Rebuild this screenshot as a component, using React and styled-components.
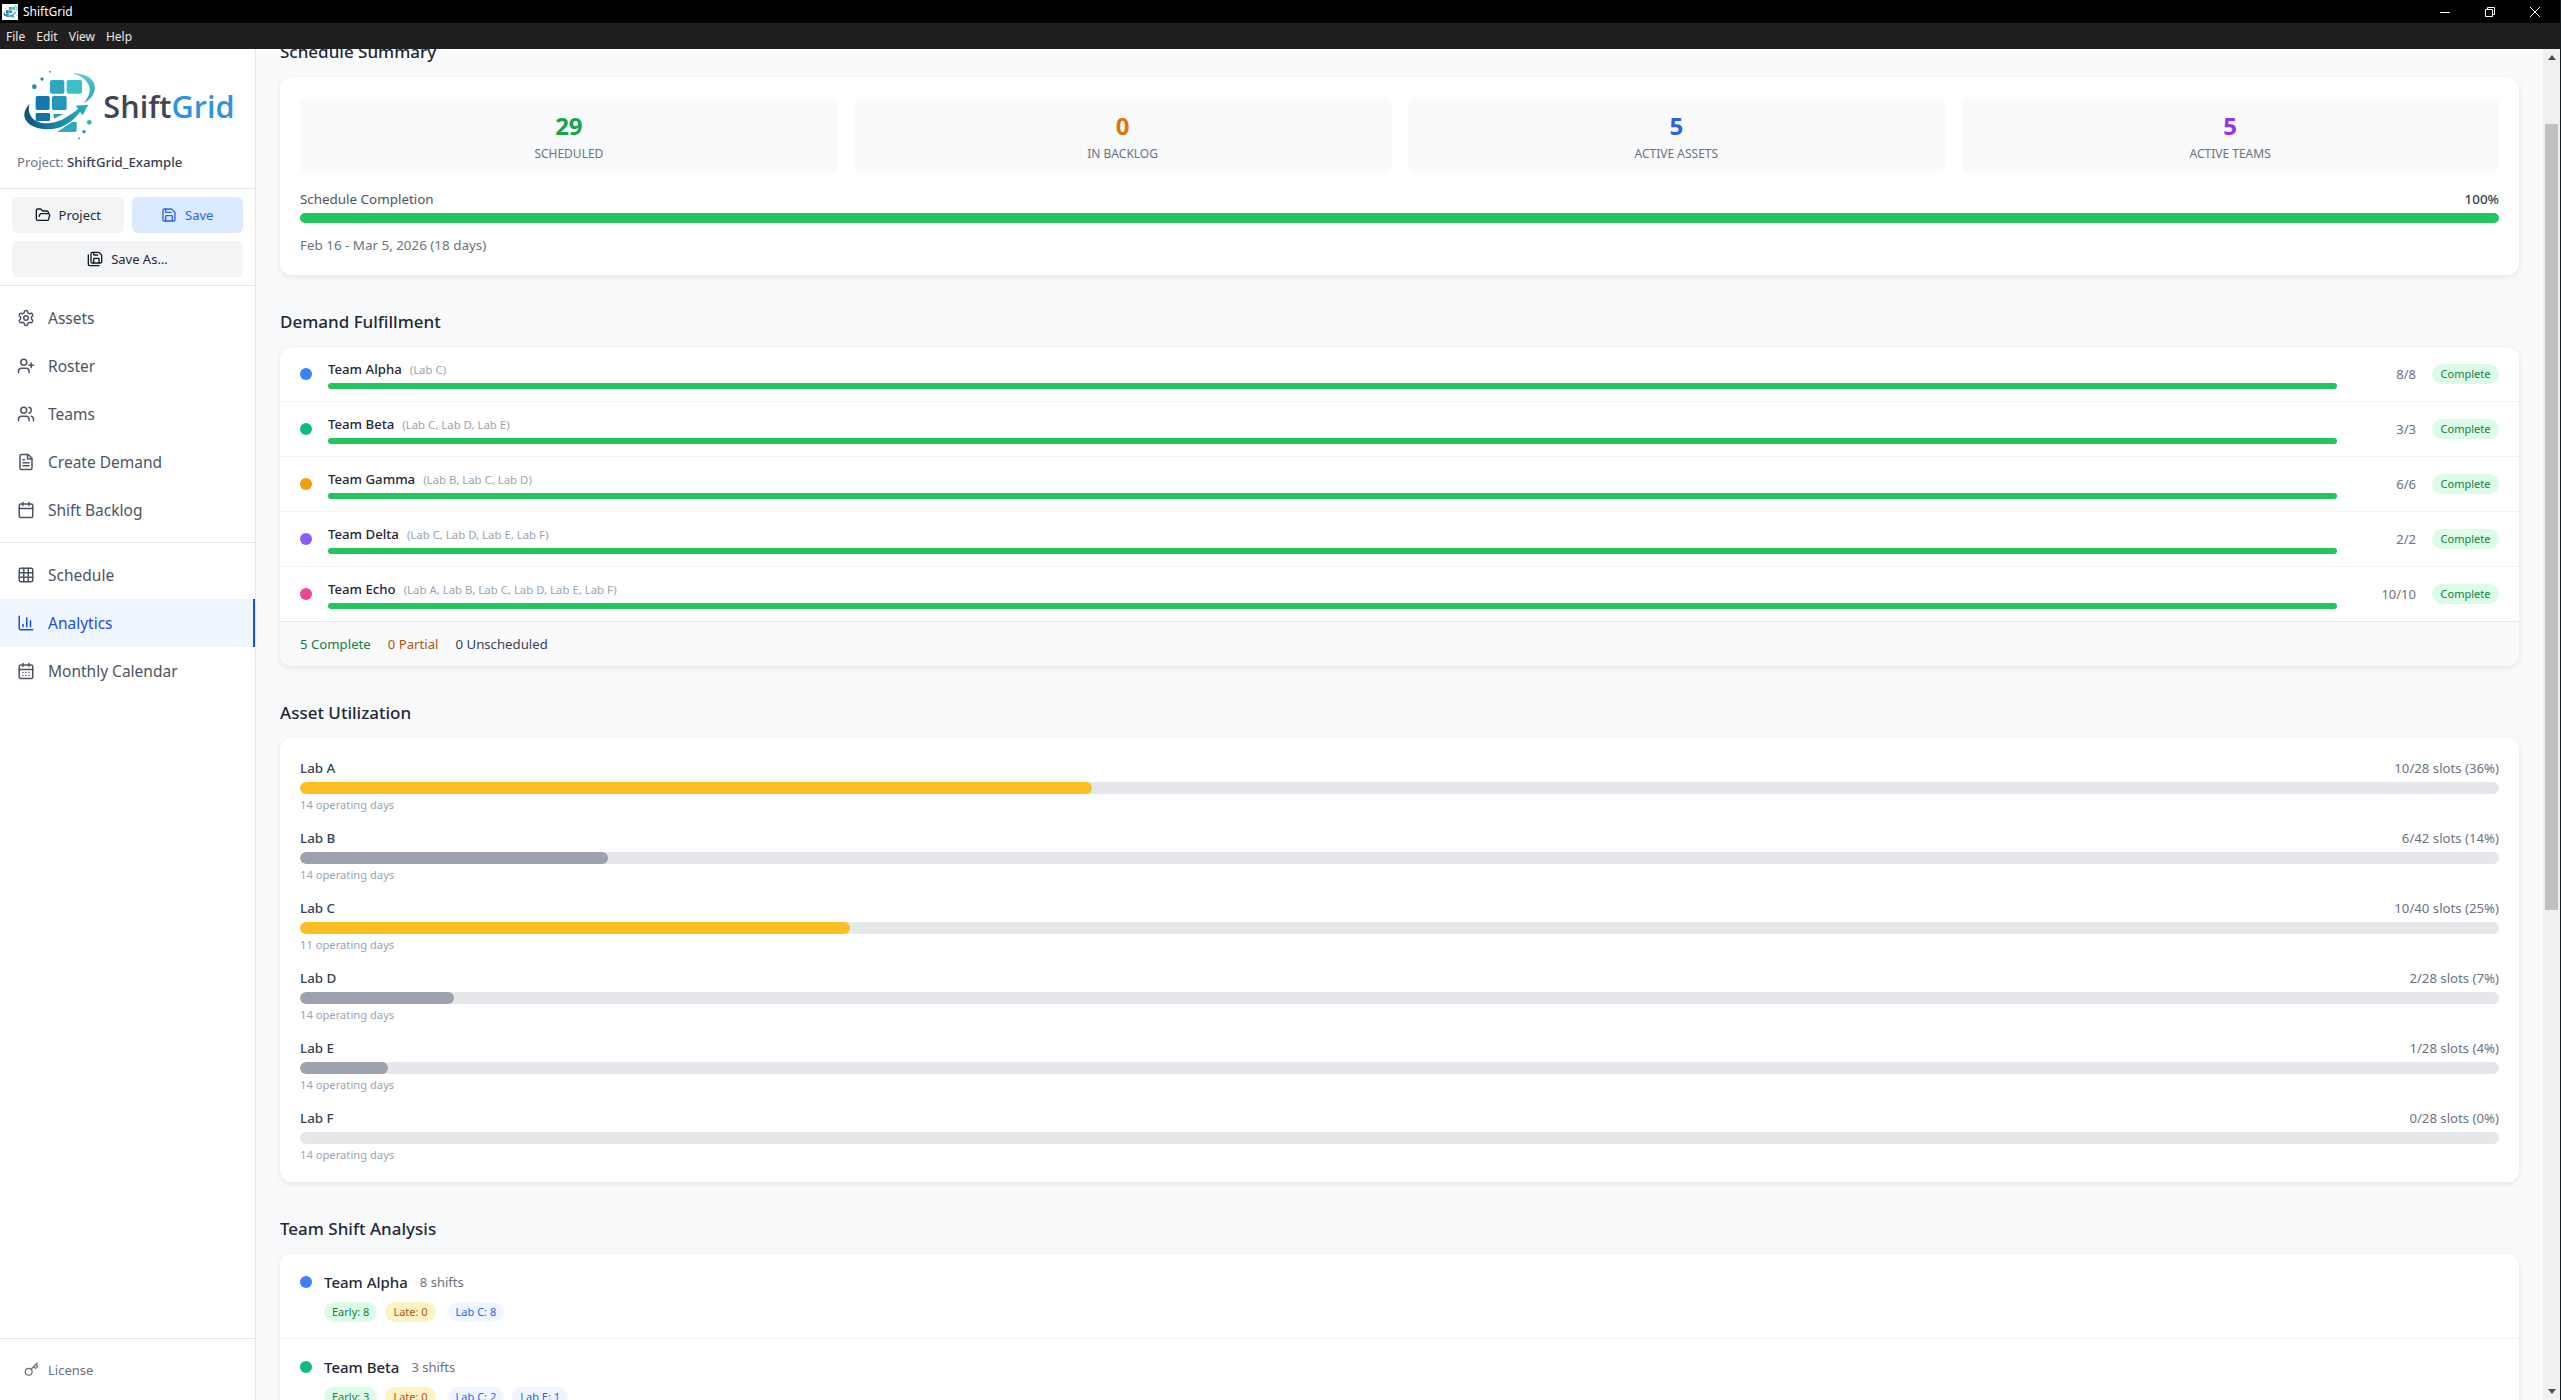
import { useLayoutEffect, useRef } from "react";
import styled, { createGlobalStyle } from "styled-components";
import {
  Settings,
  UserPlus,
  Users,
  FileText,
  Calendar,
  Grid3x3,
  ChartColumn,
  CalendarDays,
  FolderOpen,
  Save,
  SaveAll,
  Key,
} from "lucide-react";

const teams = [
  { name: "Team Alpha", color: "#3b82f6", labs: "Lab C", done: "8/8", shifts: 8, early: 8, late: 0, chips: ["Lab C: 8"] },
  { name: "Team Beta", color: "#10b981", labs: "Lab C, Lab D, Lab E", done: "3/3", shifts: 3, early: 3, late: 0, chips: ["Lab C: 2", "Lab E: 1"] },
  { name: "Team Gamma", color: "#f59e0b", labs: "Lab B, Lab C, Lab D", done: "6/6", shifts: 6, early: 4, late: 2, chips: ["Lab B: 3", "Lab C: 2", "Lab D: 1"] },
  { name: "Team Delta", color: "#8b5cf6", labs: "Lab C, Lab D, Lab E, Lab F", done: "2/2", shifts: 2, early: 1, late: 1, chips: ["Lab C: 1", "Lab D: 1"] },
  { name: "Team Echo", color: "#ec4899", labs: "Lab A, Lab B, Lab C, Lab D, Lab E, Lab F", done: "10/10", shifts: 10, early: 6, late: 4, chips: ["Lab A: 10"] },
];

const assets = [
  { name: "Lab A", slots: "10/28 slots (36%)", pct: 36, days: 14, busy: true },
  { name: "Lab B", slots: "6/42 slots (14%)", pct: 14, days: 14 },
  { name: "Lab C", slots: "10/40 slots (25%)", pct: 25, days: 11, busy: true },
  { name: "Lab D", slots: "2/28 slots (7%)", pct: 7, days: 14 },
  { name: "Lab E", slots: "1/28 slots (4%)", pct: 4, days: 14 },
  { name: "Lab F", slots: "0/28 slots (0%)", pct: 0, days: 14 },
];

const stats = [
  { value: 29, label: "Scheduled", color: "#16a34a" },
  { value: 0, label: "In Backlog", color: "#d97706" },
  { value: 5, label: "Active Assets", color: "#2563eb" },
  { value: 5, label: "Active Teams", color: "#9333ea" },
];

const setupNav = [
  { label: "Assets", Icon: Settings },
  { label: "Roster", Icon: UserPlus },
  { label: "Teams", Icon: Users },
  { label: "Create Demand", Icon: FileText },
  { label: "Shift Backlog", Icon: Calendar },
];

const viewNav = [
  { label: "Schedule", Icon: Grid3x3 },
  { label: "Analytics", Icon: ChartColumn, active: true },
  { label: "Monthly Calendar", Icon: CalendarDays },
];

const LogoMark = () => (
  <>
    <defs>
      <linearGradient id="swoosh" x1="0" y1="0" x2="1" y2="0">
        <stop offset="0" stopColor="#12527f" />
        <stop offset="1" stopColor="#25b3c4" />
      </linearGradient>
      <linearGradient id="arc" x1="0" y1="0" x2="1" y2="1">
        <stop offset="0" stopColor="#7fd6dc" />
        <stop offset="1" stopColor="#1ea5bb" />
      </linearGradient>
    </defs>
    <rect x="150" y="90" width="43" height="41" rx="6" fill="#2fa6c2" />
    <rect x="200" y="90" width="46" height="41" rx="6" fill="#3ac0c8" />
    <rect x="107" y="138" width="42" height="42" rx="5" fill="#1678b0" />
    <rect x="156" y="138" width="44" height="42" rx="5" fill="#2696bb" />
    <rect x="107" y="189" width="43" height="24" rx="4" fill="#1573ab" />
    <path d="M160 192h30l-28 14z" fill="#2a9dbd" />
    <path d="M172 246l44-30 14 0v24q0 6-6 6z" fill="#2ea9bf" />
    <path d="M88 163C62 188 70 222 112 234 170 248 214 222 240 186l8 10 17-32-38 3 8 9C196 208 160 226 122 218 96 212 82 192 88 163z" fill="url(#swoosh)" />
    <path d="M215 70C262 66 298 96 280 132 273 146 262 154 250 160 268 140 276 118 262 98 252 84 234 74 215 70z" fill="url(#arc)" />
    <circle cx="103" cy="110" r="7" fill="#1c8fc0" />
    <circle cx="126" cy="87" r="5" fill="#1c8fc0" />
    <circle cx="150" cy="65" r="3" fill="#2fa6c2" />
    <circle cx="268" cy="217" r="7" fill="#2db4c4" />
    <circle cx="252" cy="245" r="5" fill="#1c8fc0" />
    <circle cx="237" cy="265" r="3" fill="#2fa6c2" />
  </>
);

export default function App() {
  const scroller = useRef(null);

  useLayoutEffect(() => {
    scroller.current.scrollTop = 100;
  }, []);

  return (
    <Shell>
      <GlobalStyle />
      <TitleBar>
        <AppIcon viewBox="48 45 240 240">
          <LogoMark />
        </AppIcon>
        <AppName>ShiftGrid</AppName>
        <WindowButtons>
          <WindowButton>
            <svg width="12" height="12" viewBox="0 0 12 12">
              <path d="M1 6.5h10" stroke="#fff" />
            </svg>
          </WindowButton>
          <WindowButton>
            <svg width="12" height="12" viewBox="0 0 12 12" fill="none">
              <path d="M1.5 3.5h7v7h-7zM3.5 3.5v-2h7v7h-2" stroke="#fff" />
            </svg>
          </WindowButton>
          <WindowButton>
            <svg width="12" height="12" viewBox="0 0 12 12">
              <path d="M1 1l10 10M11 1L1 11" stroke="#fff" />
            </svg>
          </WindowButton>
        </WindowButtons>
      </TitleBar>
      <MenuBar>
        <MenuItem>File</MenuItem>
        <MenuItem>Edit</MenuItem>
        <MenuItem>View</MenuItem>
        <MenuItem>Help</MenuItem>
      </MenuBar>
      <Body>
        <Sidebar>
          <Brand>
            <LogoSvg viewBox="48 45 666 240">
              <LogoMark />
              <LogoText x="310" y="205">
                Shift<tspan fill="#2f93de">Grid</tspan>
              </LogoText>
            </LogoSvg>
            <ProjectLine>
              Project: <strong>ShiftGrid_Example</strong>
            </ProjectLine>
          </Brand>
          <Actions>
            <ActionButton>
              <FolderOpen size={16} color="#111827" />
              Project
            </ActionButton>
            <ActionButton $primary>
              <Save size={16} />
              Save
            </ActionButton>
            <ActionButton $wide>
              <SaveAll size={16} color="#111827" />
              Save As...
            </ActionButton>
          </Actions>
          <NavGroup>
            {setupNav.map(({ label, Icon }) => (
              <NavItem key={label}>
                <Icon size={18} />
                {label}
              </NavItem>
            ))}
          </NavGroup>
          <NavGroup $last>
            {viewNav.map(({ label, Icon, active }) => (
              <NavItem key={label} $active={active}>
                <Icon size={18} />
                {label}
              </NavItem>
            ))}
          </NavGroup>
          <SideFooter>
            <Key size={15} />
            License
          </SideFooter>
        </Sidebar>
        <Main ref={scroller}>
          <PageTitle>Analytics</PageTitle>

          <Section>
            <Heading>Schedule Summary</Heading>
            <SummaryCard>
              <StatGrid>
                {stats.map((s) => (
                  <StatBox key={s.label}>
                    <StatValue $color={s.color}>{s.value}</StatValue>
                    <StatLabel>{s.label}</StatLabel>
                  </StatBox>
                ))}
              </StatGrid>
              <SplitLine>
                <span>Schedule Completion</span>
                <strong>100%</strong>
              </SplitLine>
              <CompletionBar />
              <DateRange>Feb 16 - Mar 5, 2026 (18 days)</DateRange>
            </SummaryCard>
          </Section>

          <Section>
            <Heading>Demand Fulfillment</Heading>
            <Card>
              {teams.map((t) => (
                <DemandRow key={t.name}>
                  <Dot $color={t.color} />
                  <DemandInfo>
                    <DemandName>
                      {t.name}
                      <LabList>({t.labs})</LabList>
                    </DemandName>
                    <ThinBar />
                  </DemandInfo>
                  <Count>{t.done}</Count>
                  <StatusBadge>Complete</StatusBadge>
                </DemandRow>
              ))}
              <DemandFooter>
                <FooterStat $color="#15803d">5 Complete</FooterStat>
                <FooterStat $color="#b45309">0 Partial</FooterStat>
                <FooterStat $color="#374151">0 Unscheduled</FooterStat>
              </DemandFooter>
            </Card>
          </Section>

          <Section>
            <Heading>Asset Utilization</Heading>
            <AssetCard>
              {assets.map((a) => (
                <div key={a.name}>
                  <AssetHead>
                    <strong>{a.name}</strong>
                    <span>{a.slots}</span>
                  </AssetHead>
                  <Track>
                    <Fill $busy={a.busy} style={{ width: `${a.pct}%` }} />
                  </Track>
                  <AssetDays>{a.days} operating days</AssetDays>
                </div>
              ))}
            </AssetCard>
          </Section>

          <Section>
            <Heading>Team Shift Analysis</Heading>
            <Card>
              {teams.map((t) => (
                <ShiftRow key={t.name}>
                  <ShiftHead>
                    <Dot $color={t.color} />
                    <ShiftName>{t.name}</ShiftName>
                    <ShiftCount>{t.shifts} shifts</ShiftCount>
                  </ShiftHead>
                  <ChipRow>
                    <Chip $bg="#dcfce7" $fg="#15803d">Early: {t.early}</Chip>
                    <Chip $bg="#fef3c7" $fg="#b45309">Late: {t.late}</Chip>
                    <LabChips>
                      {t.chips.map((c) => (
                        <Chip key={c} $bg="#eff6ff" $fg="#2563eb">{c}</Chip>
                      ))}
                    </LabChips>
                  </ChipRow>
                </ShiftRow>
              ))}
            </Card>
          </Section>
        </Main>
        <ScrollRail>
          <ScrollArrow>
            <svg width="8" height="5" viewBox="0 0 8 5">
              <path d="M4 0l4 5H0z" fill="#505050" />
            </svg>
          </ScrollArrow>
          <ScrollThumb />
          <ScrollArrow $end>
            <svg width="8" height="5" viewBox="0 0 8 5">
              <path d="M0 0h8L4 5z" fill="#505050" />
            </svg>
          </ScrollArrow>
        </ScrollRail>
      </Body>
    </Shell>
  );
}

const GlobalStyle = createGlobalStyle`
  html, body {
    margin: 0;
    height: 100%;
    overflow: hidden;
    background: #0d1b2a;
  }

  body {
    font-family: "Noto Sans", "Open Sans", sans-serif;
  }

  * {
    box-sizing: border-box;
  }
`;

const Shell = styled.div`
  width: 2560px;
  height: 100vh;
  display: flex;
  flex-direction: column;
  overflow: hidden;
`;

const TitleBar = styled.div`
  height: 23px;
  background: #000;
  display: flex;
  align-items: center;
  padding-left: 2px;
  color: #fff;
`;

const AppIcon = styled.svg`
  width: 16px;
  height: 16px;
  background: #fff;
`;

const AppName = styled.span`
  margin-left: 5px;
  font-size: 12px;
`;

const WindowButtons = styled.div`
  margin-left: auto;
  display: flex;
  gap: 33px;
  padding-right: 19px;
`;

const WindowButton = styled.div`
  width: 12px;
  height: 12px;
  display: flex;
`;

const MenuBar = styled.div`
  height: 26px;
  background: #1f1f1f;
  display: flex;
  align-items: center;
  padding-left: 6px;
  gap: 11px;
`;

const MenuItem = styled.span`
  color: #e8e8e8;
  font-size: 12px;
`;

const Body = styled.div`
  flex: 1;
  min-height: 0;
  display: flex;
`;

const Sidebar = styled.aside`
  width: 256px;
  flex-shrink: 0;
  background: #fff;
  border-right: 1px solid #e5e7eb;
  display: flex;
  flex-direction: column;
`;

const Brand = styled.div`
  padding: 16px 16px 0;
  height: 140px;
  border-bottom: 1px solid #e5e7eb;
`;

const LogoSvg = styled.svg`
  display: block;
  width: 222px;
  height: 80px;
`;

const LogoText = styled.text`
  font-family: "Open Sans", sans-serif;
  font-size: 92px;
  font-weight: 600;
  fill: #3f4652;
`;

const ProjectLine = styled.div`
  margin-top: 7px;
  padding-left: 1px;
  font-size: 13.2px;
  line-height: 20px;
  color: #6b7280;

  strong {
    font-weight: 500;
    color: #374151;
  }
`;

const Actions = styled.div`
  display: grid;
  grid-template-columns: 1fr 1fr;
  gap: 8px;
  padding: 8px 12px;
  border-bottom: 1px solid #e5e7eb;
`;

const ActionButton = styled.div`
  grid-column: ${(p) => (p.$wide ? "1 / -1" : "auto")};
  height: 36px;
  display: flex;
  align-items: center;
  justify-content: center;
  gap: 8px;
  border-radius: 6px;
  font-size: 13px;
  background: ${(p) => (p.$primary ? "#dbeafe" : "#f3f4f6")};
  color: ${(p) => (p.$primary ? "#2563eb" : "#1f2937")};
`;

const NavGroup = styled.nav`
  padding: 8px 0;
  border-bottom: ${(p) => (p.$last ? "none" : "1px solid #e5e7eb")};
`;

const NavItem = styled.div`
  height: 48px;
  display: flex;
  align-items: center;
  gap: 13px;
  padding-left: 17px;
  font-size: 15.5px;
  background: ${(p) => (p.$active ? "#eff6ff" : "transparent")};
  color: ${(p) => (p.$active ? "#1d4ed8" : "#4b5563")};
  border-right: ${(p) => (p.$active ? "2px solid #1d4ed8" : "none")};
`;

const SideFooter = styled.div`
  margin-top: auto;
  height: 62px;
  border-top: 1px solid #e5e7eb;
  display: flex;
  align-items: center;
  gap: 9px;
  padding-left: 24px;
  font-size: 13px;
  color: #6b7280;
`;

const Main = styled.main`
  flex: 1;
  min-width: 0;
  overflow-y: scroll;
  background: #f9fafb;
  padding: 24px 24px 24px;
`;

const ScrollRail = styled.div`
  width: 17px;
  flex-shrink: 0;
  background: #f0f0f0;
  display: flex;
  flex-direction: column;
`;

const ScrollArrow = styled.div`
  height: 17px;
  display: flex;
  align-items: center;
  justify-content: center;
  margin-top: ${(p) => (p.$end ? "auto" : "0")};
`;

const ScrollThumb = styled.div`
  height: 786px;
  margin: 58px 2px 0;
  background: #c1c1c1;
`;

const PageTitle = styled.h1`
  margin: 0 0 32px;
  font-size: 24px;
  line-height: 36px;
  font-weight: 600;
  color: #111827;
`;

const Section = styled.section`
  margin-bottom: 36px;
`;

const Heading = styled.h2`
  margin: 0 0 15px;
  font-size: 17px;
  line-height: 21px;
  font-weight: 500;
  color: #1f2937;
`;

const Card = styled.div`
  background: #fff;
  border-radius: 12px;
  box-shadow: 0 2px 6px rgba(0, 0, 0, 0.09);
  overflow: hidden;
`;

const SummaryCard = styled(Card)`
  padding: 20px;
`;

const StatGrid = styled.div`
  display: grid;
  grid-template-columns: repeat(4, 1fr);
  gap: 16px;
  margin-bottom: 16px;
`;

const StatBox = styled.div`
  height: 76px;
  padding-top: 15px;
  border-radius: 8px;
  background: #f9fafb;
  text-align: center;
`;

const StatValue = styled.div`
  font-size: 24px;
  line-height: 28px;
  font-weight: 700;
  color: ${(p) => p.$color};
`;

const StatLabel = styled.div`
  margin-top: 6px;
  font-size: 12px;
  line-height: 16px;
  text-transform: uppercase;
  color: #6b7280;
`;

const SplitLine = styled.div`
  display: flex;
  justify-content: space-between;
  font-size: 13.4px;
  line-height: 20px;
  color: #4b5563;
  margin-bottom: 4px;

  strong {
    font-weight: 500;
    color: #374151;
  }
`;

const CompletionBar = styled.div`
  height: 10px;
  border-radius: 5px;
  background: #22c55e;
`;

const DateRange = styled.div`
  margin-top: 12px;
  font-size: 13.4px;
  line-height: 20px;
  color: #6b7280;
`;

const DemandRow = styled.div`
  display: flex;
  align-items: center;
  gap: 16px;
  padding: 12px 20px;
  border-bottom: 1px solid #f3f4f6;

  &:nth-last-child(2) {
    border-bottom-color: #e5e7eb;
  }
`;

const Dot = styled.span`
  width: 12px;
  height: 12px;
  flex-shrink: 0;
  border-radius: 50%;
  background: ${(p) => p.$color};
`;

const DemandInfo = styled.div`
  flex: 1;
  min-width: 0;
`;

const DemandName = styled.div`
  height: 20px;
  display: flex;
  align-items: baseline;
  font-size: 13.2px;
  line-height: 20px;
  font-weight: 500;
  color: #1f2937;
  margin-bottom: 4px;
`;

const LabList = styled.span`
  margin-left: 8px;
  font-size: 11.4px;
  font-weight: 400;
  color: #9ca3af;
`;

const ThinBar = styled.div`
  height: 6px;
  border-radius: 3px;
  background: #22c55e;
`;

const Count = styled.div`
  width: 63px;
  text-align: right;
  font-size: 13px;
  color: #6b7280;
`;

const StatusBadge = styled.div`
  width: 67px;
  height: 20px;
  border-radius: 10px;
  background: #dcfce7;
  color: #15803d;
  font-size: 11px;
  line-height: 20px;
  text-align: center;
`;

const DemandFooter = styled.div`
  height: 44px;
  display: flex;
  align-items: center;
  gap: 17px;
  padding: 0 20px;
  background: #f9fafb;
`;

const FooterStat = styled.span`
  font-size: 13.2px;
  color: ${(p) => p.$color};
`;

const AssetCard = styled(Card)`
  padding: 20px;
  display: flex;
  flex-direction: column;
  gap: 16px;
`;

const AssetHead = styled.div`
  display: flex;
  justify-content: space-between;
  align-items: baseline;
  height: 20px;
  font-size: 13.2px;
  line-height: 20px;
  color: #6b7280;
  margin-bottom: 4px;

  strong {
    font-size: 13.4px;
    font-weight: 500;
    color: #374151;
  }
`;

const Track = styled.div`
  height: 12px;
  border-radius: 6px;
  background: #e5e7eb;
  overflow: hidden;
`;

const Fill = styled.div`
  height: 100%;
  border-radius: 6px;
  background: ${(p) => (p.$busy ? "#fbbf24" : "#9ca3af")};
`;

const AssetDays = styled.div`
  margin-top: 3px;
  font-size: 11.2px;
  line-height: 15px;
  color: #9ca3af;
`;

const ShiftRow = styled.div`
  padding: 16px 20px;
  border-bottom: 1px solid #f3f4f6;
`;

const ShiftHead = styled.div`
  height: 24px;
  display: flex;
  align-items: center;
`;

const ShiftName = styled.span`
  margin-left: 12px;
  font-size: 15px;
  font-weight: 500;
  color: #1f2937;
`;

const ShiftCount = styled.span`
  margin-left: 12px;
  font-size: 13px;
  color: #6b7280;
`;

const ChipRow = styled.div`
  margin-top: 8px;
  padding-left: 24px;
  display: flex;
  gap: 8px;
`;

const LabChips = styled.div`
  margin-left: 4px;
  display: flex;
  gap: 8px;
`;

const Chip = styled.span`
  height: 20px;
  padding: 0 8px;
  border-radius: 10px;
  font-size: 11px;
  line-height: 20px;
  background: ${(p) => p.$bg};
  color: ${(p) => p.$fg};
`;
